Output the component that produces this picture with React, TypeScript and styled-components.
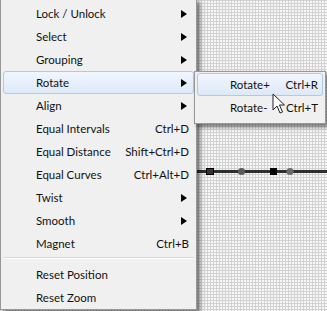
import * as React from 'react'
import styled, { createGlobalStyle } from 'styled-components'

const GlobalStyle = createGlobalStyle`
	html, body {
		margin: 0;
		padding: 0;
	}
	body {
		font-family: Lato, 'Liberation Sans', sans-serif;
		font-size: 11.5px;
		color: #111;
	}
`

const Canvas = styled.div`
	position: relative;
	width: 327px;
	height: 311px;
	overflow: hidden;
	background-color: #f7f7f7;
	background-image: linear-gradient(to right, #d2d2d2 1px, transparent 1px),
		linear-gradient(to bottom, #d2d2d2 1px, transparent 1px);
	background-size: 3px 3px;
`

const Diagram = styled.svg`
	position: absolute;
	left: 0;
	top: 0;
`

const Menu = styled.div<{ $left: number; $top: number; $width: number }>`
	position: absolute;
	left: ${(p) => p.$left}px;
	top: ${(p) => p.$top}px;
	width: ${(p) => p.$width}px;
	box-sizing: border-box;
	display: flex;
	flex-direction: column;
	padding: 2px 1px 0;
	background: #f0f0f0;
	border: 1px solid #979797;
	box-shadow: 3px 3px 4px rgba(0, 0, 0, 0.5);
`

const SubMenu = styled(Menu)`
	padding: 1px 1px 4px;
`

const Item = styled.div<{ $active?: boolean }>`
	display: flex;
	align-items: center;
	justify-content: space-between;
	height: 23px;
	box-sizing: border-box;
	margin: 0 1px;
	padding: 0 4px 0 32px;
	border: 1px solid ${(p) => (p.$active ? '#a9cbee' : 'transparent')};
	border-radius: 3px;
	background: ${(p) =>
		p.$active ? 'linear-gradient(to bottom, #f1f6fd, #dde9f9)' : 'transparent'};
	white-space: nowrap;
	line-height: 1;
`

const Shortcut = styled.span`
	margin-left: 12px;
`

const Arrow = styled.span`
	width: 0;
	height: 0;
	margin-right: 2px;
	border-top: 4px solid transparent;
	border-bottom: 4px solid transparent;
	border-left: 6px solid #000;
`

const Separator = styled.div`
	margin: 2px 1px 4px;
	border-top: 1px solid #d7d7d7;
	border-bottom: 1px solid #fff;
`

const Cursor = styled.svg`
	position: absolute;
	left: 272px;
	top: 93px;
`

type Entry = { label: string; shortcut?: string; sub?: boolean; active?: boolean }

const main: Entry[] = [
	{ label: 'Lock / Unlock', sub: true },
	{ label: 'Select', sub: true },
	{ label: 'Grouping', sub: true },
	{ label: 'Rotate', sub: true, active: true },
	{ label: 'Align', sub: true },
	{ label: 'Equal Intervals', shortcut: 'Ctrl+D' },
	{ label: 'Equal Distance', shortcut: 'Shift+Ctrl+D' },
	{ label: 'Equal Curves', shortcut: 'Ctrl+Alt+D' },
	{ label: 'Twist', sub: true },
	{ label: 'Smooth', sub: true },
	{ label: 'Magnet', shortcut: 'Ctrl+B' },
]

const resets: Entry[] = [{ label: 'Reset Position' }, { label: 'Reset Zoom' }]

const rotate: Entry[] = [
	{ label: 'Rotate+', shortcut: 'Ctrl+R', active: true },
	{ label: 'Rotate-', shortcut: 'Ctrl+T' },
]

const MenuItem = ({ label, shortcut, sub, active }: Entry) => (
	<Item $active={active}>
		<span>{label}</span>
		{shortcut && <Shortcut>{shortcut}</Shortcut>}
		{sub && <Arrow />}
	</Item>
)

export default function App() {
	return (
		<>
			<GlobalStyle />
			<Canvas>
				<Diagram width={327} height={311}>
					<line x1={0} y1={171.5} x2={327} y2={171.5} stroke="#2e2e2e" strokeWidth={3} />
					<rect x={206.5} y={168.5} width={7} height={6} fill="#3a3032" stroke="#000" />
					<circle cx={241.5} cy={171.5} r={3.6} fill="#5a5a5a" />
					<rect x={270} y={168} width={7} height={7} fill="#000" />
					<circle cx={290} cy={171.5} r={3.6} fill="#6a6a6a" />
				</Diagram>
				<Menu $left={0} $top={-1} $width={197}>
					{main.map((e) => (
						<MenuItem key={e.label} {...e} />
					))}
					<Separator />
					{resets.map((e) => (
						<MenuItem key={e.label} {...e} />
					))}
				</Menu>
				<SubMenu $left={194} $top={71} $width={132}>
					{rotate.map((e) => (
						<MenuItem key={e.label} {...e} />
					))}
				</SubMenu>
				<Cursor width={14} height={22} viewBox="0 0 14 22">
					<path
						d="M1 1 L1 17 L5 13 L8 20 L10.5 19 L7.5 12 L12.5 12 Z"
						fill="#fff"
						stroke="#222"
						strokeWidth={1}
						strokeLinejoin="miter"
					/>
				</Cursor>
			</Canvas>
		</>
	)
}
